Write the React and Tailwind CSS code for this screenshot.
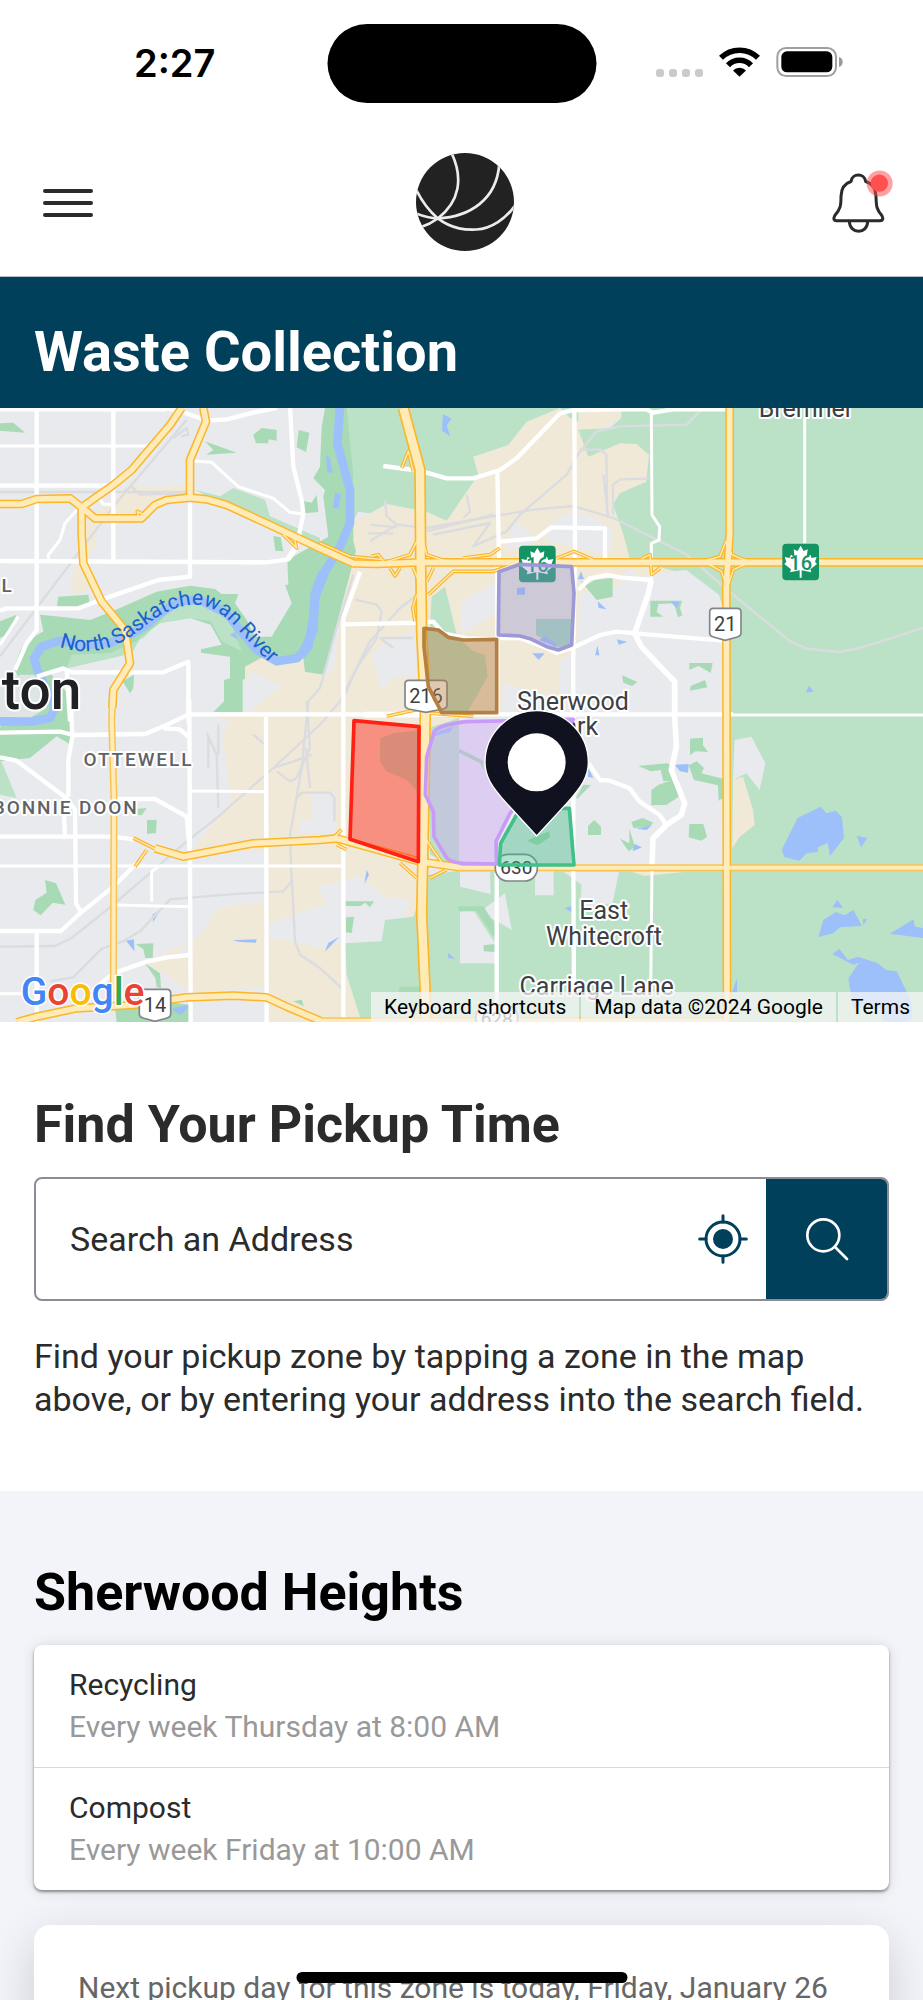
import React from 'react';

const land = {
  beige: [
    '730,771 790,746 910,751 915,791 960,801 1000,790 1060,338 1110,316 1160,288 1280,311 1340,338 1435,201 1420,146 1525,111 1580,41 1680,0 1870,0 1864,30 1815,60 1859,106 1909,108 1947,141 1939,221 1859,256 1839,290 1839,316 1869,376 1889,451 1989,476 2024,490 1950,560 1720,900 1500,940 1290,960 1290,1376 1240,1530 1040,1610 1085,1843 800,1843 790,1736 600,1756 545,1736 500,1700 435,1666 575,1596 530,1636 660,1500 800,1481 800,1330 570,1336 655,1226 695,1176 665,976 690,946 640,921 750,912',
    '330,290 395,220 425,240 560,232 560,270 460,290 420,325 290,330 288,410 262,450 265,545 212,560 225,470 250,330',
    '2194,736 2209,806 2197,906',
    '2197,936 2205,1000 2199,1050',
  ],
  grey: [
    '1380,1390 1380,930 1505,925 1510,826 1600,850 1680,870 1680,760 1730,720 1740,560 1800,530 1854,536 1884,481 1920,505 2059,486 2157,560 2169,600 2169,1390',
    '950,1436 1085,1405 1150,1466 1230,1476 1215,1535 1155,1546 1148,1602 1030,1606 950,1620 900,1580 900,1510 985,1490',
    '805,1546 920,1510 960,1515 960,1620 880,1600 805,1590',
    '935,1156 1005,1156 1005,1276 935,1276',
    '750,786 845,836 790,876 750,911 725,880',
    '1115,736 1170,696 1250,666 1250,806 1180,806 1145,851',
    '1385,581 1490,521 1490,616 1385,676',
    '1540,336 1590,376 1605,406 1520,426',
    '1640,356 1700,316 1770,321 1835,366 1830,440 1640,400',
    '935,1236 935,1276 900,1276 900,1236',
    '640,1540 575,1600 530,1640 575,1650 575,1540',
  ],
  light: [
    '1035,0 1680,0 1580,41 1525,111 1420,146 1435,201 1340,338 1280,311 1160,288 1110,316 1075,311 1060,338 1060,200 1020,70',
    '2769,0 1864,0 1864,30 1830,60 1735,65 1765,146 1860,106 1909,108 1947,141 1939,221 1859,256 1839,290 1869,376 1889,451 2024,490 2059,486 2157,560 2169,600 2169,1400 2769,1400',
    '1240,1526 1285,1400 1377,1388 2769,1376 2769,1843 1085,1843 1040,1700 1035,1606 1145,1600 1155,1536',
    '1285,960 1377,930 1377,1376 1290,1340',
    '1295,566 1335,536 1370,680 1290,660',
    '1280,660 1370,686 1420,730 1455,742 1463,806 1400,916 1290,910',
    '1140,991 1180,976 1257,966 1257,1156 1220,1116 1160,1090 1140,1060',
    '585,245 660,265 700,240 795,275 810,325 960,390 960,420 680,295',
    '0,1050 50,1170 0,1160',
    '1680,0 1735,0 1735,40 1710,30',
  ],
  gap: [
    '1380,1391 1470,1391 1472,1458 1380,1436',
    '1605,1388 1661,1388 1661,1462 1605,1462',
    '1690,1391 1857,1391 1838,1486 1740,1500 1745,1430',
    '1380,1511 1420,1506 1485,1606 1485,1666 1380,1666',
    '1440,1511 1515,1456 1535,1566',
    '2204,996 2254,986 2296,1066 2279,1146 2239,1096 2199,1116',
  ],
  sand: [
    '2199,1116 2229,1106 2259,1206 2264,1251 2219,1286 2197,1321',
    '1894,1391 2059,1391 1934,1404',
  ],
  dark: [
    '975,0 1040,0 1060,200 1060,400 1068,430 970,800 915,791 910,751 790,746 735,776 735,812 728,816 728,912 640,912 672,880 672,816 690,811 690,746 603,734 603,724 665,710 632,650 570,630 480,645 420,690 395,736 200,781 150,790 165,820 210,860 212,1010 170,985 90,1050 0,1060 0,960 60,820 42,780 60,730 80,700 130,670 120,620 180,626 270,636 360,600 470,551 570,533 645,543 665,558 715,558 705,586 740,636 765,686 815,686 875,586 855,530 865,531 862,456 985,386 970,266 975,246 940,211 960,176 965,56',
    '0,46 40,44 75,74 0,68', '175,566 265,560 270,590 240,600 170,600', '0,640 50,620 20,680 0,690',
    '760,80 785,60 830,66 830,98 806,94 804,106 768,106', '896,66 928,74 918,132 890,118',
    '615,100 670,120 710,134 618,140 640,126', '820,384 842,388 850,430 826,428', '912,280 935,284 950,260 955,312 914,316',
    '368,820 402,800 400,840 390,856', '441,1236 470,1236 468,1275 441,1278', '410,1202 440,1200 425,1222 412,1220',
    '135,1416 168,1426 196,1490 158,1484 122,1522 100,1506 106,1476 140,1454', '408,1608 460,1606 458,1650 436,1650 430,1624',
    '435,1666 480,1696 483,1740 470,1738 466,1710', '345,1800 480,1780 568,1790 566,1843 350,1843', '880,1780 905,1775 912,1795',
    '1740,516 1760,530 1785,516 1838,510 1838,566 1790,576', '1951,578 2046,578 2040,600 2047,622 2034,628 2022,586 1975,588 1970,612 1990,626 1951,626',
    '2068,765 2138,765 2132,795 2096,774 2068,785', '2072,834 2115,816 2122,838 2070,848', '1866,802 1912,822 1896,834 1870,824',
    '2070,992 2109,989 2109,1012 2124,1032 2086,1030 2070,1042', '1915,1074 2000,1066 2012,1070 2036,1116 1990,1120 1982,1086 1952,1090',
    '2066,1072 2090,1060 2112,1080 2104,1096 2169,1112 2169,1170 2156,1178 2154,1132 2082,1116', '1954,1146 1976,1130 2022,1114 2036,1166 2000,1190 1954,1192',
    '1894,1242 1928,1230 1960,1244 1948,1256 1900,1260', '2068,1248 2110,1248 2121,1286 2104,1298 2066,1288',
    '1860,1292 1888,1306 1888,1262 1905,1316 1886,1330', '1764,1254 1783,1236 1803,1256 1803,1281 1764,1281',
    '1035,1480 1122,1480 1110,1498 1095,1484 1082,1494 1037,1494', '1038,1528 1062,1526 1055,1575 1038,1573',
    '1375,1495 1450,1495 1485,1550 1484,1590 1430,1510 1375,1510', '1450,1612 1485,1608 1485,1632 1452,1630',
    '1732,1172 1772,1132 1750,1130 1728,1170', '1377,1022 1415,1040 1450,1058 1450,1086 1440,1066 1377,1034',
    '1608,633 1716,633 1716,716 1670,716 1608,680', '1198,1736 1290,1736 1290,1800 1198,1790',
    '1584,1296 1648,1270 1650,1288 1612,1312 1584,1300',
  ],
  water: [
    '1329,18 1355,32 1340,52 1350,84 1326,68', '978,142 990,150 998,196 982,192', '1005,254 1023,258 1016,302 999,300',
    '1551,540 1575,538 1575,560 1551,560', '1618,696 1634,684 1670,708 1666,716', '1597,736 1634,736 1616,756', '1743,490 1752,514 1733,514',
    '1793,580 1820,604 1796,600', '1792,712 1798,742 1786,742', '2010,580 2038,582 2030,600', '1851,694 1882,702 1856,710', '2426,833 2442,850 2418,854',
    '2345,1326 2393,1230 2462,1196 2479,1216 2508,1208 2526,1228 2532,1290 2490,1344 2483,1304 2454,1318 2454,1332 2420,1336 2398,1358 2354,1348',
    '2570,1283 2602,1290 2583,1318', '2512,1476 2530,1500 2497,1498', '2455,1587 2470,1536 2508,1512 2533,1522 2560,1506 2586,1554 2520,1558 2500,1576',
    '2588,1534 2602,1532 2590,1552', '2670,1577 2740,1534 2745,1556 2769,1560 2769,1590',
    '2497,1638 2518,1622 2544,1656 2574,1646 2634,1666 2658,1686 2690,1690 2734,1780 2738,1830 2720,1843 2650,1843 2640,1800 2560,1800 2545,1712 2576,1664 2560,1670',
    '2211,1710 2211,1754 2196,1754', '2024,1070 2066,1068 2064,1094 2040,1090', '457,1520 480,1506 460,1542', '378,1598 402,1594 403,1630',
    '697,1597 770,1594 768,1604 720,1602', '520,1800 570,1790 545,1820 520,1810', '1100,1385 1107,1400 1093,1428', '974,1632 1018,1586 985,1605',
    '1345,1635 1366,1654 1343,1650', '1694,1500 1714,1494 1718,1516', '1908,1262 1955,1252 1940,1266', '1898,1330 1903,1308 1926,1318',
    '1765,1080 1780,1110 1764,1106', '1300,976 1360,955 1350,972 1306,984', '690,680 706,672 714,696',
  ],
};

const rails = [
  'M0,252 H560', 'M560,36 L455,160 L345,290 L0,745', 'M370,250 L395,236 L420,260 L560,256', 'M520,90 L560,60 L565,80 L545,85',
  'M0,1616 L165,1614 L215,1590 L340,1490 L560,1300 L650,1230 L820,1080 L960,950 L1020,880 L1110,700 L1200,600 L1280,540',
  'M150,1720 L220,1708 L305,1622 L370,1600 L420,1570 L510,1474 L680,1460 L850,1450 L875,1420 L870,1280 L905,1080 L925,880 L960,840 L1010,660 L1060,500',
  'M875,1400 L885,1600 L900,1640 L960,1680 L1030,1745', 'M620,975 L650,1040 L655,1200', 'M655,950 V1040', 'M625,990 V1080',
  'M760,980 L795,1010', 'M820,1080 L880,1060 L935,1040', 'M830,1090 L870,1120 L890,1110 L930,1020 L920,880', 'M930,1140 L918,1020',
  'M890,1170 L905,1154 H990 L1003,1170 V1240', 'M1110,400 L1190,350 L1280,360 L1450,330 L1600,305 L1720,294 L1840,330 L2060,440 L2175,540 L2370,700 L2420,722 L2520,732 L2580,720 L2769,660',
  'M1280,370 L1480,320 M1300,380 L1470,345 L1420,415 L1520,370 L1560,320 L1700,200 L1740,130 L1790,70 L1860,55 L2060,50 L2110,0',
  'M1155,275 L1160,325 L1190,350 M1110,350 L1190,358 M1105,376 H1180 M1400,260 L1410,310 L1390,330', 'M1740,126 L1800,124 L1819,140 L1822,320 M1810,200 L1825,330',
  'M1839,320 V230 L1860,214 L1947,212', 'M1065,575 L1130,590 L1145,610 L1130,690 L1070,780 L1035,860', 'M1140,690 H1240 M1140,690 L1180,720',
];

const streets = [
  'M110,0 V666 L80,706 L45,786', 'M340,0 V456', 'M570,276 V506 L475,516 L330,566 L235,601 H20 L0,608', 'M0,4 H500',
  'M0,233 H330', 'M0,459 L800,463 L865,454 L890,416 L910,318 L905,276 L880,176 L870,0', 'M500,0 L560,16 L620,38 L680,34 L760,14 L830,0',
  'M110,806 L190,781 L215,793 H490 L565,761 V940', 'M200,786 L210,940', 'M435,978 L500,951 L565,919 H2200',
  'M0,974 L180,971 L220,981 L435,978 M490,961 L540,964 L565,986', 'M212,876 L217,986 L205,1056 V1166', 'M0,1048 L50,1058 L200,1171 L225,1206 L228,1486 L245,1516',
  'M190,1176 L195,1281', 'M340,1173 H465 L560,1226 L570,1336', 'M568,876 L572,1843', 'M798,926 L800,1843', 'M0,1286 H340 L400,1294',
  'M0,1569 H183 L240,1516 L340,1436 L410,1366', 'M110,1571 V1843', 'M280,1746 L340,1696 L440,1661 L500,1648 L568,1641',
  'M1080,491 L1030,631 V1843', 'M1030,649 L1270,644 L1300,641 L1330,676 L1400,691 L1490,694', 'M1492,190 L1497,456', 'M1492,476 V919 M1490,1366 V1843',
  'M1150,174 L1240,186 L1280,194 L1340,211 H1420 L1500,186 L1550,151 L1680,16 L1720,6 L1860,4 H1939 L1959,14 L2019,4 H2180', 'M1723,6 L1725,430 L1720,716 V1366 L1722,1756',
  'M1500,401 L1610,391 L1655,358 L1815,361 V451', 'M1735,546 L1770,511 L1820,501 L1860,508 L1954,516', 'M1500,690 L1560,690 L1640,720 L1670,735 L1725,716 L1800,681 L1850,671 L1904,676 L2169,698',
  'M1765,1066 L1800,1116 L1830,1118 L1889,1141 L1919,1181 L1979,1221 L1999,1251',
];
const wideStreets = ['M1954,516 L1944,560 L1904,676 L1924,716 L2024,821 V926 L2029,1016 L2014,1086 L2054,1186 L2044,1221 L1999,1251 L1959,1291 L1956,1376', 'M1090,920 H1280', 'M865,452 L888,416'];
const lanes = [
  'M0,114 H450', 'M580,159 L635,163 L715,236 L820,271 L870,313 L910,318', 'M240,296 L195,346 L180,396 L145,441 V456', 'M0,711 L55,626',
  'M575,1149 L798,1151', 'M0,1374 H1030', 'M0,1757 H70', 'M455,1481 V1391 L475,1376', 'M348,1491 L568,1496', 'M1954,14 L1956,321 L1979,356 L1977,396 L1954,406 V520',
  'M2414,31 V406', 'M2200,921 H2769', 'M1956,1386 L1952,1743', 'M295,268 L310,288 L345,290',
];

const highways = [
  'M0,288 H65 L110,273 L210,271 L245,298 L285,331 L425,331 L465,291 L500,276 L570,269 L620,274 L680,291 L800,346 L960,421 L1060,466 L1130,468 L1260,463 H2769',
  'M545,0 L510,51 L395,186 L340,231 L245,298 L245,376 L250,466 L305,581 L375,666 L390,766 L340,846 L337,900',
  'M610,0 L618,41 L570,156 V266', 'M465,1321 L550,1346 L760,1306 L960,1296 L1010,1291 L1260,1361 L1380,1378',
  'M50,1843 L110,1826 L230,1801 L400,1791 L560,1768 L700,1763 L800,1768 L860,1796 L960,1838', 'M2189,0 V376 L2179,536 L2181,1843',
];
const freeway = ['M1210,0 L1260,186 L1262,456 L1265,676 L1276,900 L1272,1176 L1268,1376 L1265,1516 L1275,1736 L1278,1843'];
const ramps = [
  'M1130,470 L1230,440 L1250,400', 'M1270,400 L1280,440 L1340,460', 'M1285,560 L1360,490 L1480,490 L1540,470', 'M1390,450 L1470,440 L1500,420',
  'M1240,480 L1256,520 M1300,480 L1280,520', 'M1170,480 L1185,504 L1200,480', 'M1115,445 L1135,440 L1150,460', 'M1205,180 L1225,130 L1240,190',
  'M1660,455 L1722,430 L1780,455', 'M1925,452 L1950,440 L1955,500 L1980,480', 'M2110,460 L2160,445 L2178,400 L2196,440 L2250,463 L2200,485 L2182,540 L2164,490 Z',
  'M1245,640 L1238,600 L1250,560', 'M1160,925 L1250,905 M1280,915 L1420,925', 'M1200,1365 L1250,1410 M1290,1410 L1340,1385', 'M1275,1290 L1330,1370',
  'M1000,1290 L1025,1265 M1010,1310 L1040,1325', 'M400,1290 L470,1325 M405,1376 L440,1326', 'M415,325 L412,310 L430,320', 'M850,380 L890,420 L880,380', 'M1280,1790 L1310,1830 M1260,1800 L1230,1835',
  'M960,405 L1050,445 L1150,455',
];
const minorHighways = ['M337,890 L335,936 L342,1176 L340,1756', 'M1380,1379 L2769,1379', 'M900,1815 L960,1838 L1280,1838 L2184,1838'];

const LEAF = 'M55,6 L64,22 L76,17 L73,41 L84,33 L88,43 L103,40 L98,54 L104,61 L84,77 L87,86 L58,80 L58,102 L52,102 L52,80 L23,86 L26,77 L6,61 L12,54 L7,40 L22,43 L26,33 L37,41 L34,17 L46,22 Z';

const polys = (list, fill) => list.map((points) => <polygon key={points} points={points} fill={fill} />);

const lines = (list, stroke, width) => (
  <g fill="none" stroke={stroke} strokeWidth={width} strokeLinejoin="round">
    {list.map((d) => <path key={d} d={d} />)}
  </g>
);

const Shield = ({ x, y, w, label }) => (
  <g transform={`translate(${x} ${y})`}>
    <path
      d={`M14,3 H${w - 14} Q${w - 3},3 ${w - 3},14 V78 Q${w - 3},86 ${w - 14},89 L${w / 2},99 L14,89 Q3,86 3,78 V14 Q3,3 14,3 Z`}
      fill="#fff" stroke="#80868b" strokeWidth="5"
    />
    <text x={w / 2} y="71" textAnchor="middle" fontSize="60" fill="#3c4043">{label}</text>
  </g>
);

const Pill = ({ x, y, label }) => (
  <g transform={`translate(${x} ${y})`}>
    <rect x="3" y="3" width="126" height="80" rx="38" fill="#fff" stroke="#80868b" strokeWidth="5" />
    <text x="66" y="63" textAnchor="middle" fontSize="57" fill="#3c4043">{label}</text>
  </g>
);

const TransCanada = ({ x, y }) => (
  <g transform={`translate(${x} ${y})`}>
    <rect width="110" height="110" rx="12" fill="#159463" />
    <path d={LEAF} fill="#fff" />
    <text x="55" y="78" textAnchor="middle" fontSize="60" fontWeight="500" fill="#159463">16</text>
  </g>
);

const ZoneMap = () => (
  <svg viewBox="0 0 2769 1842" preserveAspectRatio="xMidYMid slice" className="block h-full w-full font-['Roboto',sans-serif]" role="img" aria-label="Pickup zones map">
    <rect width="2769" height="1843" fill="#e8eaed" />
    {polys(land.beige, '#f1e9d8')}
    {polys(land.grey, '#e8eaed')}
    {polys(land.light, '#bbe2c6')}
    {polys(land.gap, '#e8eaed')}
    {polys(land.sand, '#f1e9d8')}
    {polys(land.dark, '#a8dab5')}
    <polygon points="200,781 395,736 420,690 480,645 570,630 632,640 665,700 725,730 690,640 600,580 520,600 430,690 330,735 215,740" fill="#bbe2c6" />
    <polygon points="0,836 60,800 110,800 135,850 140,900 90,930 0,930" fill="#dfe5e4" />
    {polys(land.water, '#9dc0fa')}
    {lines(['M0,940 L90,941 L150,930 L165,900 L112,786 L102,751 L125,716 L180,698 L250,711 L330,705 L390,680 L440,651 L480,616 L540,580 L600,576 L680,616 L720,666 L770,726 L830,760 L890,751 L925,716 L940,626 L945,556 L965,500 L975,490 L945,570 L935,680 L910,730 M965,520 L975,490 L1020,416 L1050,346 L1050,246 L1012,106 L1020,0', 'M905,745 L940,666 L945,566'], '#9dc0fa', 26)}
    {lines(rails, '#dadce0', 7)}
    {lines(lanes, '#fff', 9)}
    {lines(streets, '#fff', 13)}
    {lines(wideStreets, '#fff', 17)}
    {lines(ramps, '#fbb629', 11)}
    {lines(minorHighways, '#f8c455', 21)}
    {lines(highways, '#fbb629', 26)}
    {lines(freeway, '#fbb629', 35)}
    {lines(ramps, '#ffebb8', 4)}
    {lines(minorHighways, '#ffebb8', 12)}
    {lines(highways, '#ffebb8', 17)}
    {lines(freeway, '#ffebb8', 25)}

    <g stroke="#fff" strokeWidth="12" strokeLinejoin="round" style={{ paintOrder: 'stroke' }} fill="#3c4043" fontSize="75" textAnchor="middle">
      <text x="2418" y="28">Bremner</text>
      <text x="1719" y="906">Sherwood</text>
      <text x="1719" y="981">Park</text>
      <text x="1811" y="1534">East</text>
      <text x="1812" y="1612">Whitecroft</text>
      <text x="1790" y="1761">Carriage Lane</text>
      <g fill="#5f6368" fontSize="57" fontWeight="500" textAnchor="end" className="tracking-widest">
        <text x="580" y="1074">OTTEWELL</text>
        <text x="416" y="1219">BONNIE DOON</text>
        <text x="41" y="553">L</text>
      </g>
      <text x="244" y="903" fontSize="165" fontWeight="500" fill="#202124" textAnchor="end">ton</text>
    </g>
    <path id="river" d="M178,716 Q266,745 346,712 C436,670 476,595 586,590 C686,595 716,690 850,800" fill="none" />
    <text fontSize="63" fill="#1a61c9">
      <textPath href="#river">North Saskatchewan River</textPath>
    </text>

    <TransCanada x={1557} y={413} />
    <TransCanada x={2347} y={407} />
    <Shield x={1212} y={814} w={132} label="216" />
    <Shield x={2126} y={598} w={100} label="21" />
    <Shield x={415} y={1741} w={100} label="14" />
    <Pill x={1483} y={1336} label="630" />
    <Pill x={1424} y={1788} label="628" />

    {/* Pickup zones */}
    <g strokeWidth="11" strokeLinejoin="round" fillOpacity="0.4">
      <polygon points="1497,491 1560,469 1715,476 1722,556 1715,711 1675,726 1640,716 1590,692 1560,684 1495,681" fill="#9c99d6" stroke="#9c99d6" />
      <polygon points="1272,661 1315,666 1345,688 1390,696 1490,694 1490,914 1325,914 1285,836 1272,716" fill="#b5793c" stroke="#b58043" />
      <path d="M1720,934 L1400,941 Q1320,950 1303,970 L1280,1046 L1276,1160 L1300,1211 L1302,1286 L1340,1350 Q1355,1364 1390,1366 L1490,1368 L1488,1300 L1530,1216 L1600,1130 Z" fill="#cda6f8" stroke="#c79bf7" />
      <polygon points="1062,938 1257,956 1255,1361 1050,1294" fill="#ff2418" fillOpacity="0.45" stroke="#ff2116" />
      <polygon points="1555,1211 1502,1306 1498,1371 1722,1371 1708,1201 1660,1201" fill="#3dbb85" stroke="#41c08a" />
    </g>

    <path d="M1610,1284 L1520,1186 C1475,1136 1455,1106 1455,1063 A155,155 0 0 1 1765,1063 C1765,1106 1745,1136 1700,1186 Z" fill="#11121f" stroke="#fff" strokeWidth="4" />
    <circle cx="1610" cy="1063" r="87" fill="#fff" />

    <text x="62" y="1792" fontSize="117" fontWeight="500" stroke="#fff" strokeWidth="9" strokeLinejoin="round" style={{ paintOrder: 'stroke' }}>
      <tspan fill="#4285f4">G</tspan>
      <tspan fill="#ea4335">o</tspan>
      <tspan fill="#fbbc04">o</tspan>
      <tspan fill="#4285f4">g</tspan>
      <tspan fill="#34a853">l</tspan>
      <tspan fill="#ea4335">e</tspan>
    </text>
  </svg>
);

const StatusBar = () => (
  <div className="relative flex h-[126px] shrink-0 items-start justify-between pt-6 pr-20 pl-[134px]">
    <span className="font-['Inter',sans-serif] text-[38px] leading-[78px] font-semibold text-black">2:27</span>
    <div className="absolute top-6 left-1/2 h-[79px] w-[269px] -translate-x-1/2 rounded-full bg-black" />
    <div className="mt-[23px] flex items-end gap-4">
      <div className="flex gap-[5px]">
        {[0, 1, 2, 3].map((i) => <span key={i} className="size-2 rounded-[3px] bg-[#cacaca]" />)}
      </div>
      <svg viewBox="0 0 123 89" className="h-[30px] w-[41px]">
        <g fill="none" stroke="#000" strokeWidth="17">
          <path d="M6,32 A79,79 0 0 1 117,32" />
          <path d="M27,54 A48,48 0 0 1 96,54" />
        </g>
        <path d="M61.5,89 L42,70 A27,27 0 0 1 81,70 Z" />
      </svg>
      <svg viewBox="0 0 199 90" className="h-[30px] w-[67px]">
        <rect x="3" y="3" width="176" height="84" rx="26" fill="none" stroke="#a0a0a0" strokeWidth="6" />
        <rect x="15" y="13" width="153" height="63" rx="17" />
        <path d="M188,30 Q199,33 199,45 Q199,57 188,60 Z" fill="#999" />
      </svg>
    </div>
  </div>
);

const Header = () => (
  <header className="relative flex h-[151px] shrink-0 items-center justify-between border-b border-[#b9bfc4] bg-white pr-7 pl-[43px]">
    <button type="button" aria-label="Open menu" className="flex w-[50px] flex-col gap-2 pt-1">
      <span className="h-1 rounded-full bg-[#2b2b2b]" />
      <span className="h-1 rounded-full bg-[#2b2b2b]" />
      <span className="h-1 rounded-full bg-[#2b2b2b]" />
    </button>
    <svg viewBox="0 0 292 292" className="absolute top-[27px] left-1/2 size-[98px] -translate-x-[46px]">
      <clipPath id="disc"><circle cx="146" cy="146" r="146" /></clipPath>
      <g clipPath="url(#disc)">
        <rect width="292" height="292" fill="#222" />
        <g fill="none" stroke="#ececec" strokeWidth="8">
          <path d="M105,-2 C142,75 130,145 65,195 Q42,212 12,222" />
          <path d="M0,108 Q25,160 65,195 C110,229 150,229 180,228 C225,225 268,195 294,158" />
          <path d="M0,180 Q35,194 65,195 C160,190 240,140 248,34" />
        </g>
      </g>
    </svg>
    <button type="button" aria-label="Notifications">
      <svg viewBox="0 0 195 200" className="h-[67px] w-[65px]" fill="none">
        <g stroke="#2b2b2b" strokeWidth="9" strokeLinecap="round" strokeLinejoin="round">
          <path d="M63,38 C66,14 104,14 107,38 C128,46 137,62 138,84 C139,112 138,122 156,143 Q163,157 150,158 H20 Q7,157 14,143 C32,122 33,112 33,84 C34,62 43,46 63,38 Z" stroke="none" />
          <path d="M63,40 C66,14 104,14 107,40 C128,46 137,62 138,84 C139,112 138,122 156,143 Q163,157 150,158 H20 Q7,157 14,143 C32,122 33,112 33,84 C34,62 43,46 63,40 Z" />
          <path d="M58,160 C60,199 112,199 113,160" />
        </g>
        <circle cx="149" cy="46" r="39" fill="#ff4b4b" fillOpacity="0.52" />
        <circle cx="148" cy="45" r="26" fill="#ff5050" />
      </svg>
    </button>
  </header>
);

const pickups = [
  { type: 'Recycling', schedule: 'Every week Thursday at 8:00 AM' },
  { type: 'Compost', schedule: 'Every week Friday at 10:00 AM' },
];

export default function App() {
  return (
    <div className="relative flex h-screen flex-col overflow-hidden bg-white font-['Roboto',sans-serif] text-[#2b2b2b]">
      <StatusBar />
      <Header />

      <main className="min-h-0 flex-1 overflow-y-auto [scrollbar-width:none]">
        <div className="bg-[#00405b] px-[34px] pt-[43px] pb-6">
          <h1 className="text-[56px] leading-[64px] font-bold text-white">Waste Collection</h1>
        </div>

        <div className="relative h-[614px] overflow-hidden">
          <ZoneMap />
          <div className="absolute right-0 bottom-0 flex gap-[2px] text-[21px] leading-[30px] text-black">
            <button type="button" className="bg-[#f5f5f5]/75 px-[13px]">Keyboard shortcuts</button>
            <span className="bg-[#f5f5f5]/75 px-[13px]">Map data ©2024 Google</span>
            <a href="#terms" className="bg-[#f5f5f5]/75 px-[13px]">Terms</a>
          </div>
        </div>

        <section className="px-[34px] pt-[73px] pb-[70px]">
          <h2 className="text-[52px] leading-[60px] font-bold">Find Your Pickup Time</h2>
          <form className="mt-[22px] flex h-[124px] overflow-hidden rounded-lg border-2 border-[#8b8d96]" onSubmit={(e) => e.preventDefault()}>
            <input
              type="text"
              aria-label="Search an Address"
              placeholder="Search an Address"
              className="min-w-0 flex-1 pl-[34px] text-[34px] outline-none placeholder:text-[#2b2b2b] placeholder:opacity-100"
            />
            <button type="button" aria-label="Use my location" className="px-[18px]">
              <svg viewBox="0 0 150 150" className="size-[50px]" stroke="#00405b" strokeWidth="9" strokeLinecap="round" fill="none">
                <circle cx="75" cy="75" r="51" />
                <circle cx="75" cy="75" r="30" fill="#00405b" stroke="none" />
                <path d="M75,5 V24 M75,126 V145 M5,75 H24 M126,75 H145" />
              </svg>
            </button>
            <button type="submit" aria-label="Search" className="flex w-[121px] items-center justify-center bg-[#00405b]">
              <svg viewBox="0 0 132 132" className="size-11" stroke="#fff" strokeWidth="8" strokeLinecap="round" fill="none">
                <circle cx="55" cy="55" r="48" />
                <path d="M90,90 L126,126" />
              </svg>
            </button>
          </form>
          <p className="mt-[34px] text-[34px] leading-[43px]">
            Find your pickup zone by tapping a zone in the map above, or by entering your address into the search field.
          </p>
        </section>

        <section className="min-h-full bg-[#f3f4f9] px-[34px] pt-[72px]">
          <h2 className="text-[52px] leading-[60px] font-bold text-black">Sherwood Heights</h2>
          <ul className="mt-[22px] divide-y divide-[#d9d9dc] rounded-lg bg-white text-[30px] leading-[42px] shadow-[0_2px_3px_rgba(0,0,0,0.4),0_1px_14px_rgba(0,0,0,0.12)]">
            {pickups.map(({ type, schedule }) => (
              <li key={type} className="px-[35px] py-[19px]">
                <p>{type}</p>
                <p className="text-[#999]">{schedule}</p>
              </li>
            ))}
          </ul>
          <div className="mt-[35px] rounded-2xl bg-white px-11 pt-[42px] pb-10 text-[30px] leading-[42px] text-[#666] shadow-[0_14px_48px_rgba(0,0,0,0.16)]">
            Next pickup day for this zone is today, Friday, January 26
          </div>
        </section>
      </main>

      {/* Home indicator */}
      <div className="absolute bottom-[17px] left-1/2 h-[11px] w-[331px] -translate-x-1/2 rounded-full bg-black" />
    </div>
  );
}
